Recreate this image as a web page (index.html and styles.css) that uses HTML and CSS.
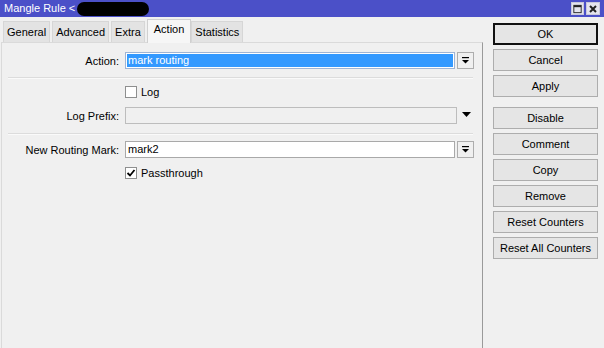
FILE: index.html
```html
<!DOCTYPE html>
<html>
<head>
<meta charset="utf-8">
<link rel="stylesheet" href="styles.css">
</head>
<body>
<div class="window">
  <div class="titlebar">
    <span class="title">Mangle Rule &lt;</span>
    <span class="redact"></span>
    <span class="spacer"></span>
    <span class="tbtn">
      <svg width="12" height="12" viewBox="0 0 12 12"><rect x="2" y="2" width="8" height="8" fill="none" stroke="#222" stroke-width="1"/><rect x="2" y="2" width="8" height="2" fill="#222"/></svg>
    </span>
    <span class="tbtn">
      <svg width="12" height="12" viewBox="0 0 12 12"><path d="M3 3 L9 9 M9 3 L3 9" stroke="#222" stroke-width="2"/></svg>
    </span>
  </div>
  <div class="main">
    <div class="left">
      <div class="tabs">
        <div class="tab">General</div>
        <div class="tab">Advanced</div>
        <div class="tab">Extra</div>
        <div class="tab active">Action</div>
        <div class="tab">Statistics</div>
      </div>
      <div class="page">
        <div class="row row-first">
          <span class="lbl">Action:</span>
          <div class="field selected">mark routing</div>
          <div class="ddbtn"><svg width="7" height="7" viewBox="0 0 7 7"><rect x="0" y="0" width="7" height="1.2" fill="#000"/><polygon points="0,3 7,3 3.5,6.5" fill="#000"/></svg></div>
        </div>
        <div class="sep"></div>
        <div class="check-row check-log">
          <span class="cb"></span><span class="cb-text">Log</span>
        </div>
        <div class="row row-prefix">
          <span class="lbl">Log Prefix:</span>
          <div class="field disabled wide"></div>
          <span class="tri"><svg width="9" height="5" viewBox="0 0 9 5"><polygon points="0,0 9,0 4.5,5" fill="#000"/></svg></span>
        </div>
        <div class="sep sep-second"></div>
        <div class="row row-mark">
          <span class="lbl">New Routing Mark:</span>
          <div class="field">mark2</div>
          <div class="ddbtn"><svg width="7" height="7" viewBox="0 0 7 7"><rect x="0" y="0" width="7" height="1.2" fill="#000"/><polygon points="0,3 7,3 3.5,6.5" fill="#000"/></svg></div>
        </div>
        <div class="check-row check-pass">
          <span class="cb"><svg width="10" height="10" viewBox="0 0 10 10"><path d="M1.5 5 L4 7.5 L8.5 2" fill="none" stroke="#000" stroke-width="1.8"/></svg></span><span class="cb-text">Passthrough</span>
        </div>
      </div>
    </div>
    <div class="right">
      <div class="btn default">OK</div>
      <div class="btn">Cancel</div>
      <div class="btn">Apply</div>
      <div class="btn group">Disable</div>
      <div class="btn">Comment</div>
      <div class="btn">Copy</div>
      <div class="btn">Remove</div>
      <div class="btn">Reset Counters</div>
      <div class="btn">Reset All Counters</div>
    </div>
  </div>
</div>
</body>
</html>
```
FILE: styles.css
```css
* { box-sizing: border-box; }
html, body {
  margin: 0;
  padding: 0;
  background: #f0f0f0;
  font-family: "Liberation Sans", Arial, sans-serif;
  font-size: 11px;
  color: #000;
}
.window {
  width: 604px;
  height: 348px;
  display: flex;
  flex-direction: column;
  overflow: hidden;
}
.titlebar {
  height: 17px;
  background: #4b50c8;
  display: flex;
  align-items: center;
  padding-left: 4px;
  padding-right: 4px;
  flex: none;
}
.title {
  color: #fff;
  font-size: 11px;
  line-height: 17px;
}
.redact {
  width: 72px;
  height: 14px;
  margin-left: 2px;
  background: #000;
  border-radius: 7px;
}
.spacer { flex: 1; }
.tbtn {
  width: 13px;
  height: 13px;
  background: #e4e4ee;
  border: 1px solid #c8c8dc;
  display: flex;
  align-items: center;
  justify-content: center;
  margin-left: 2px;
}
.tbtn:last-child { width: 14px; }
.main {
  flex: 1;
  display: flex;
}
.left {
  width: 483px;
  display: flex;
  flex-direction: column;
}
.tabs {
  height: 25px;
  display: flex;
  align-items: flex-end;
  padding-left: 3px;
  flex: none;
}
.tab {
  height: 21px;
  padding: 0 3px;
  line-height: 21px;
  background: #e3e3e3;
  border: 1px solid #d6d6d6;
  border-bottom: none;
  margin-right: 2px;
  text-align: center;
}
.tab.active {
  height: 24px;
  line-height: 18px;
  padding: 0 6px;
  background: #f6f6f6;
  border-color: #d0d0d0;
  margin-right: 0;
  margin-bottom: -1px;
  position: relative;
  z-index: 1;
}
.page {
  flex: 1;
  border-top: 1px solid #dadada;
  border-left: 1px solid #dadada;
  border-right: 1px solid #9a9a9a;
  margin-left: 1px;
  display: flex;
  flex-direction: column;
}
.row {
  display: flex;
  align-items: center;
  height: 17px;
}
.row-first { margin-top: 9px; }
.row-prefix { margin-top: 9px; }
.row-mark { margin-top: 6px; }
.lbl {
  width: 117px;
  text-align: right;
  margin-right: 6px;
  white-space: nowrap;
}
.field {
  width: 330px;
  height: 17px;
  border: 1px solid #a9a9a9;
  background: #fff;
  padding-left: 2px;
  line-height: 15px;
  white-space: nowrap;
}
.field.selected {
  background: #3399ff;
  color: #fff;
  box-shadow: inset 0 0 0 1px #fff;
  border-color: #9fb4d4;
}
.field.disabled {
  background: #f0f0f0;
  border-color: #bdbdbd;
}
.field.wide { width: 332px; }
.ddbtn {
  width: 17px;
  height: 17px;
  margin-left: 2px;
  border: 1px solid #adadad;
  background: #f0f0f0;
  display: flex;
  align-items: center;
  justify-content: center;
}
.tri {
  margin-left: 5px;
  display: flex;
  align-items: center;
  margin-top: -2px;
}
.sep {
  margin-top: 8px;
  margin-left: 6px;
  width: 465px;
  height: 2px;
  border-top: 1px solid #dcdcdc;
  border-bottom: 1px solid #fafafa;
}
.sep-second { margin-top: 9px; }
.check-row {
  display: flex;
  align-items: center;
  height: 12px;
  margin-left: 123px;
}
.check-log { margin-top: 7px; }
.check-pass { margin-top: 9px; }
.cb {
  width: 12px;
  height: 12px;
  border: 1px solid #8e8f8f;
  background: #fff;
  display: flex;
  align-items: center;
  justify-content: center;
  margin-right: 4px;
}
.cb-text { line-height: 12px; }
.right {
  flex: 1;
  padding: 6px 6px 0 10px;
  display: flex;
  flex-direction: column;
  gap: 4px;
}
.btn {
  width: 105px;
  height: 22px;
  border: 1px solid #adadad;
  background: #e5e5e5;
  text-align: center;
  line-height: 20px;
  white-space: nowrap;
}
.btn.default {
  border: 2px solid #111;
  line-height: 18px;
}
.btn.group { margin-top: 6px; }
```
